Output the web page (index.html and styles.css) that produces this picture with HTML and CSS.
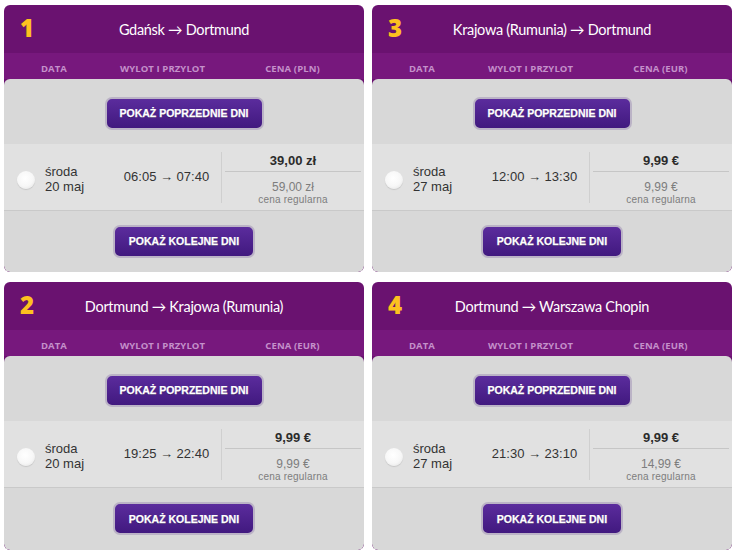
FILE: index.html
```html
<!DOCTYPE html>
<html lang="pl">
<head>
<meta charset="utf-8">
<link rel="stylesheet" href="styles.css">
</head>
<body>
<div class="grid">
  <section class="panel">
    <header class="head"><span class="num">1</span><h2 class="route">Gdańsk → Dortmund</h2><span></span></header>
    <div class="cols"><span>DATA</span><span>WYLOT I PRZYLOT</span><span>CENA (PLN)</span></div>
    <div class="body">
      <div class="area top"><button class="btn btn-prev">POKAŻ POPRZEDNIE DNI</button></div>
      <div class="row">
        <div class="date"><span class="radio"></span><span class="day">środa<br>20 maj</span></div>
        <div class="time">06:05 → 07:40</div>
        <div class="price"><div class="now">39,00 zł</div><div class="reg"><span class="old">59,00 zł</span><span class="lbl">cena regularna</span></div></div>
      </div>
      <div class="area bottom"><button class="btn btn-next">POKAŻ KOLEJNE DNI</button></div>
    </div>
  </section>
  <section class="panel">
    <header class="head"><span class="num">3</span><h2 class="route">Krajowa (Rumunia) → Dortmund</h2><span></span></header>
    <div class="cols"><span>DATA</span><span>WYLOT I PRZYLOT</span><span>CENA (EUR)</span></div>
    <div class="body">
      <div class="area top"><button class="btn btn-prev">POKAŻ POPRZEDNIE DNI</button></div>
      <div class="row">
        <div class="date"><span class="radio"></span><span class="day">środa<br>27 maj</span></div>
        <div class="time">12:00 → 13:30</div>
        <div class="price"><div class="now">9,99 €</div><div class="reg"><span class="old">9,99 €</span><span class="lbl">cena regularna</span></div></div>
      </div>
      <div class="area bottom"><button class="btn btn-next">POKAŻ KOLEJNE DNI</button></div>
    </div>
  </section>
  <section class="panel">
    <header class="head"><span class="num">2</span><h2 class="route">Dortmund → Krajowa (Rumunia)</h2><span></span></header>
    <div class="cols"><span>DATA</span><span>WYLOT I PRZYLOT</span><span>CENA (EUR)</span></div>
    <div class="body">
      <div class="area top"><button class="btn btn-prev">POKAŻ POPRZEDNIE DNI</button></div>
      <div class="row">
        <div class="date"><span class="radio"></span><span class="day">środa<br>20 maj</span></div>
        <div class="time">19:25 → 22:40</div>
        <div class="price"><div class="now">9,99 €</div><div class="reg"><span class="old">9,99 €</span><span class="lbl">cena regularna</span></div></div>
      </div>
      <div class="area bottom"><button class="btn btn-next">POKAŻ KOLEJNE DNI</button></div>
    </div>
  </section>
  <section class="panel">
    <header class="head"><span class="num">4</span><h2 class="route">Dortmund → Warszawa Chopin</h2><span></span></header>
    <div class="cols"><span>DATA</span><span>WYLOT I PRZYLOT</span><span>CENA (EUR)</span></div>
    <div class="body">
      <div class="area top"><button class="btn btn-prev">POKAŻ POPRZEDNIE DNI</button></div>
      <div class="row">
        <div class="date"><span class="radio"></span><span class="day">środa<br>27 maj</span></div>
        <div class="time">21:30 → 23:10</div>
        <div class="price"><div class="now">9,99 €</div><div class="reg"><span class="old">14,99 €</span><span class="lbl">cena regularna</span></div></div>
      </div>
      <div class="area bottom"><button class="btn btn-next">POKAŻ KOLEJNE DNI</button></div>
    </div>
  </section>
</div>
</body>
</html>
```

FILE: styles.css
```css
* { box-sizing: border-box; }
html, body { margin: 0; padding: 0; background: #ffffff; }
body { font-family: "Liberation Sans", Arial, sans-serif; }

.grid {
  display: grid;
  grid-template-columns: 360px 360px;
  grid-template-rows: 267px 268px;
  column-gap: 8px;
  row-gap: 10px;
  padding: 5px 0 0 4px;
}

.panel {
  display: flex;
  flex-direction: column;
  background: #6a1270;
  border-radius: 6px;
  overflow: hidden;
}

.head {
  height: 48px;
  display: grid;
  grid-template-columns: 1fr auto 1fr;
  align-items: center;
}
.num {
  font-family: "Open Sans", Lato, sans-serif;
  font-weight: 800;
  font-size: 24px;
  color: #fdc11f;
  padding-left: 16px;
  margin-top: -3px;
}
.route {
  margin: 0;
  font-family: Lato, "Open Sans", sans-serif;
  font-weight: 400;
  font-size: 14.5px;
  color: #ffffff;
  letter-spacing: -0.3px;
  margin-top: 1px;
}

.cols {
  height: 26px;
  background: #77187d;
  display: grid;
  grid-template-columns: 100px 117px 1fr;
  align-items: center;
  font-family: "Open Sans", sans-serif;
  font-weight: 700;
  font-size: 9.5px;
  letter-spacing: 0.1px;
  color: #c490ca;
  text-align: center;
  padding-top: 5px;
}

.body {
  flex: 1;
  display: flex;
  flex-direction: column;
  background: #d8d8d8;
  border-radius: 6px;
}

.area {
  display: flex;
  justify-content: center;
  align-items: center;
}
.area.top { height: 65px; padding-top: 3px; }
.area.bottom { flex: 1; padding-bottom: 1px; }

.btn {
  font-family: "Liberation Sans", Arial, sans-serif;
  font-weight: 700;
  font-size: 10.5px;
  color: #ffffff;
  letter-spacing: 0;
  background: linear-gradient(#5b2c9d, #41197f);
  border: 2px solid #bbb3c6;
  border-radius: 7px;
  height: 33px;
  padding: 0;
  text-shadow: 0 1px 0 rgba(0,0,0,0.35);
  -webkit-text-stroke: 0.25px #ffffff;
}
.btn-prev { width: 159px; }
.btn-next { width: 142px; }

.row {
  height: 67px;
  background: #e1e1e1;
  border-bottom: 1px solid #c9c9c9;
  display: grid;
  grid-template-columns: 100px 117px 1fr;
  font-size: 13px;
  color: #333333;
}
.date {
  display: flex;
  align-items: center;
  padding-left: 13px;
  gap: 10px;
}
.radio {
  width: 18px;
  height: 18px;
  border-radius: 50%;
  background: radial-gradient(circle at 45% 40%, #ffffff 0%, #f7f7f7 55%, #dedede 100%);
  box-shadow: 0 1px 1px rgba(0,0,0,0.12);
  margin-top: 5px;
}
.day { line-height: 15px; margin-top: 3px; }
.time {
  display: flex;
  align-items: center;
  justify-content: center;
  padding-left: 8px;
  margin-top: -1px;
}
.price {
  position: relative;
  display: flex;
  flex-direction: column;
  padding: 0 3px 0 4px;
}
.price::before {
  content: "";
  position: absolute;
  left: 0;
  top: 8px;
  bottom: 7px;
  border-left: 1px solid #cfcfcf;
}
.now {
  height: 28px;
  border-bottom: 1px solid #c6c6c6;
  text-align: center;
  font-weight: 700;
  padding-top: 9px;
  color: #2b2b2b;
}
.reg {
  display: flex;
  flex-direction: column;
  align-items: center;
  padding-top: 9px;
}
.old { font-size: 12px; color: #7d7d7d; line-height: 13px; }
.lbl { font-size: 10px; color: #7d7d7d; line-height: 11px; letter-spacing: 0.2px; }
```
